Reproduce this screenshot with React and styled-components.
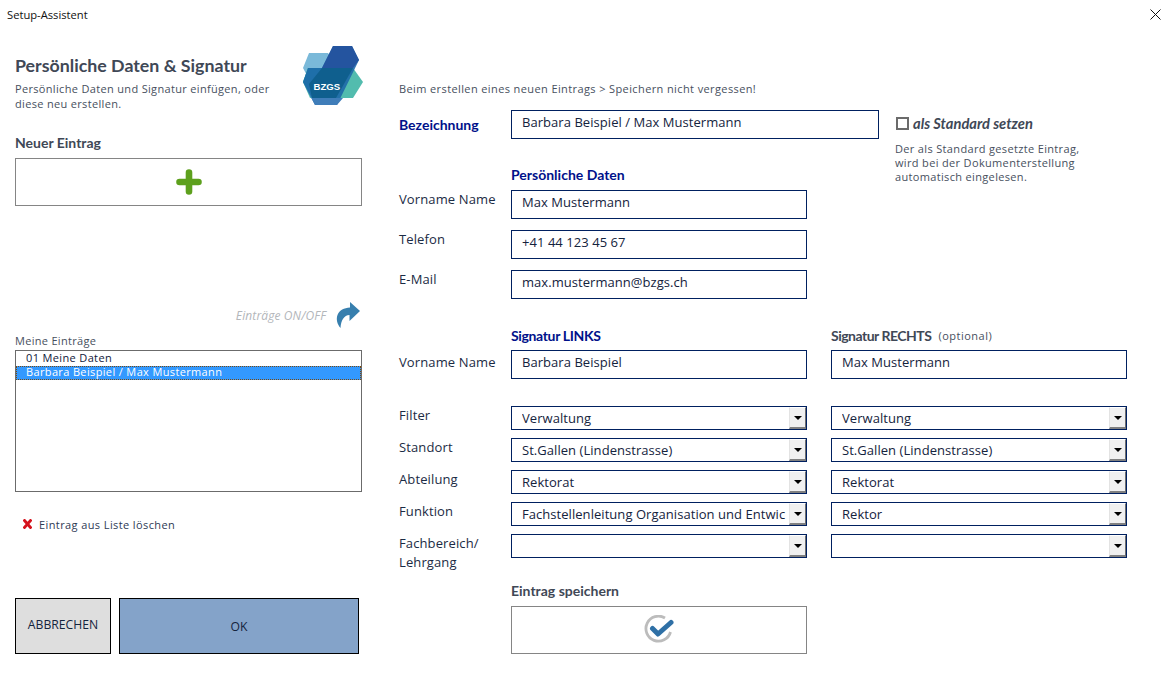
import React from "react";
import styled, { createGlobalStyle } from "styled-components";

const Global = createGlobalStyle`
  html, body { margin: 0; padding: 0; background: #fff; }
  * { box-sizing: border-box; }
`;

const body = `"Open Sans", "Noto Sans", sans-serif`;
const heavy = `Lato, "Open Sans", sans-serif`;

const Window = styled.div`
  width: 1170px; height: 673px; background: #fff; overflow: hidden;
  display: flex; flex-direction: column; font-family: ${body}; color: #1b2b44;
`;
const TitleBar = styled.header`
  height: 30px; flex: none; display: flex; align-items: center; justify-content: space-between;
  padding: 0 9px 2px 7px; font-size: 11.2px; color: #111;
`;
const Main = styled.main`display: flex; flex: 1; padding-left: 15px;`;
const Left = styled.section`width: 347px; flex: none; display: flex; flex-direction: column;`;
const Right = styled.section`margin-left: 37px; flex: 1; display: flex; flex-direction: column;`;

const Head = styled.div`display: flex; justify-content: space-between; height: 84px; padding-top: 16px;`;
const Title = styled.h1`margin: 9px 0 0; font: 700 17.8px/20px ${heavy}; color: #3f4856;`;
const Sub = styled.p`margin: 6px 0 0; font-size: 11px; line-height: 15px; color: #47505e; letter-spacing: .33px; white-space: nowrap;`;
const Logo = styled.svg`width: 60px; height: 60px; flex: none; margin-right: -1px;`;
const SectionLabel = styled.h2`margin: 20px 0 7px; font: 700 14px/17px ${heavy}; color: #3f4856;`;
const ActionBox = styled.button`
  display: flex; align-items: center; justify-content: center; padding: 0; background: #fff;
  border: 1px solid #858585; height: 48px; width: ${p => p.$w || "100%"};
`;
const ToggleRow = styled.div`
  display: flex; justify-content: flex-end; align-items: center; gap: 10px;
  margin-top: 96px; height: 26px; padding-right: 2px;
`;
const ToggleText = styled.span`font-size: 12px; letter-spacing: .12px; font-style: italic; color: #b3b6ba;`;
const ListLabel = styled.div`font-size: 11px; line-height: 14px; margin-top: 6px; color: #47505e; letter-spacing: .3px;`;
const List = styled.div`height: 142px; margin-top: 2px; border: 1px solid #6b6b6b; padding-top: 1px; background: #fff;`;
const ListItem = styled.div`
  height: 14px; padding-left: 10px;
  font-size: 11px; line-height: 12px; letter-spacing: .36px;
  color: ${p => (p.$selected ? "#fff" : "#10203a")};
  background: ${p => (p.$selected ? "#3399ff" : "transparent")};
  outline: ${p => (p.$selected ? "1px dotted #7a4a10" : "none")};
  outline-offset: -1px;
`;
const DeleteRow = styled.div`display: flex; align-items: center; gap: 7px; margin: 25px 0 0 8px; height: 14px; font-size: 11px; color: #2e3a55; letter-spacing: .4px;`;
const Buttons = styled.div`display: flex; gap: 8px; margin-top: 67px;`;
const Btn = styled.button`
  height: 56px; width: ${p => p.$w}px; border: 1px solid #000; background: ${p => p.$bg};
  font: 12.2px ${body}; color: #14233d; padding: ${p => p.$pad};
`;

const Notice = styled.p`margin: 52px 0 0; height: 14px; font-size: 11px; line-height: 14px; color: #47505e; letter-spacing: .39px;`;
const Row = styled.div`
  display: grid; grid-template-columns: 112px 296px 24px 296px; margin-top: ${p => p.$top || 0}px; align-items: start;
`;
const TopRow = styled.div`display: flex; margin-top: 14px; height: 29px;`;
const Label = styled.div`font-size: 13px; line-height: 16px; letter-spacing: .12px; color: #1b2b44; padding-top: ${p => p.$pt ?? 1}px;`;
const TallLabel = styled(Label)`line-height: 19px; padding-top: 0;`;
const NavyLabel = styled.div`
  font: 700 14px/17px ${heavy}; color: #00118a; padding-top: ${p => p.$pt || 0}px;
  width: ${p => (p.$w ? p.$w + "px" : "auto")}; letter-spacing: ${p => p.$ls || 0}px;
`;
const Field = styled.div`
  height: 29px; border: 1px solid #002060; padding: 0 10px 5px; display: flex; align-items: center;
  font-size: 13px; letter-spacing: .05px; color: #14233d; width: ${p => (p.$w ? p.$w + "px" : "auto")}; white-space: nowrap;
`;
const Pick = styled.div`
  height: 24px; border: 1px solid #002060; display: flex; align-items: center; padding-left: 10px;
  font-size: 13px; letter-spacing: .05px; color: #14233d; overflow: hidden; white-space: nowrap;
`;
const PickText = styled.span`flex: 1; overflow: hidden;`;
const PickBtn = styled.span`
  width: 17px; height: 22px; flex: none; background: #f0f0f0; display: flex; align-items: center; justify-content: center;
  border-right: 1px solid #6e6e6e; border-bottom: 2px solid #808080; border-top: 1px solid #fff; border-left: 1px solid #e3e3e3;
`;
const Arrow = styled.i`width: 0; height: 0; border: 4px solid transparent; border-top-color: #000; border-bottom: 0; display: block;`;
const Standard = styled.div`margin-left: 17px; display: flex; align-items: flex-start; gap: 4px; padding-top: 7px;`;
const Check = styled.span`width: 13px; height: 13px; border: 2px solid #6b6b6b; display: block;`;
const StandardText = styled.span`font: italic 700 14.7px/13px ${heavy}; color: #3f4856;`;
const StandardNote = styled.p`
  margin: 3px 0 0 496px; height: 42px; font-size: 11px; line-height: 14px; color: #47505e; letter-spacing: .34px; white-space: nowrap;
`;
const DarkLabel = styled.div`font: 700 14px/17px ${heavy}; color: #3f4856; letter-spacing: ${p => p.$ls || 0}px;`;
const Optional = styled.span`font: 11px ${body}; letter-spacing: .5px; margin-left: 7px; color: #47505e; position: relative; top: -1px;`;

const Empty = () => <span />;

const Select = ({ children }) => (
  <Pick>
    <PickText>{children}</PickText>
    <PickBtn><Arrow /></PickBtn>
  </Pick>
);

export default function App() {
  return (
    <Window>
      <Global />
      <TitleBar>
        <span>Setup-Assistent</span>
        <svg width="11" height="11" viewBox="0 0 11 11"><path d="M.5.5l10 10M10.5.5l-10 10" stroke="#111" strokeWidth="1" /></svg>
      </TitleBar>
      <Main>
        <Left>
          <Head>
            <div>
              <Title>Persönliche Daten &amp; Signatur</Title>
              <Sub>Persönliche Daten und Signatur einfügen, oder<br />diese neu erstellen.</Sub>
            </div>
            <Logo viewBox="303 46 60 60">
              <polygon points="303,68 309,53 328,53 340,68 310,81" fill="#7ab9d9" />
              <polygon points="303,82 308,68 353,68 363,82 353,98 310,98" fill="#52bcae" />
              <polygon points="303,82 308,68 322,68 334,98 312,98" fill="#27a5ad" opacity=".9" />
              <polygon points="333,46 352,46 359,60 337,105 315,105 303,82 308,68 322,68" fill="#1d67a8" opacity=".88" />
              <polygon points="333,46 352,46 359,60 353,68 322,68" fill="#24549f" />
              <polygon points="322,68 353,68 336,98 312,98 309,84" fill="#0f5f8e" />
              <polygon points="303,82 312,98 343,98 337,105 315,105" fill="#3f7db9" />
              <text x="313.500" y="89.500" fontFamily="Liberation Sans, sans-serif" fontWeight="700" fontSize="9.600" fill="#fff">BZGS</text>
            </Logo>
          </Head>
          <SectionLabel>Neuer Eintrag</SectionLabel>
          <ActionBox aria-label="Neuer Eintrag">
            <svg width="26" height="26" viewBox="0 0 26 26"><path d="M13 3.500v19M3.500 13h19" stroke="#5da01d" strokeWidth="6.600" strokeLinecap="round" /></svg>
          </ActionBox>
          <ToggleRow>
            <ToggleText>Einträge ON/OFF</ToggleText>
            <svg width="24" height="27" viewBox="0 0 24 27"><path d="M14 0 24 9 13.500 19V13C8 13.500 5 18 4.500 26 1 22 0 17 1.500 13 3.500 8 8 6 14 5.500Z" fill="#377fae" /></svg>
          </ToggleRow>
          <ListLabel>Meine Einträge</ListLabel>
          <List>
            <ListItem>01 Meine Daten</ListItem>
            <ListItem $selected>Barbara Beispiel / Max Mustermann</ListItem>
          </List>
          <DeleteRow>
            <svg width="9" height="10" viewBox="0 0 9 10"><path d="M1.500 1.500l6 7M7.500 1.500l-6 7" stroke="#d5121c" strokeWidth="2.800" strokeLinecap="square" /></svg>
            Eintrag aus Liste löschen
          </DeleteRow>
          <Buttons>
            <Btn $w={96} $bg="#dedede" $pad="0 0 4px">ABBRECHEN</Btn>
            <Btn $w={240} $bg="#84a3c9" $pad="0">OK</Btn>
          </Buttons>
        </Left>
        <Right>
          <Notice>Beim erstellen eines neuen Eintrags &gt; Speichern nicht vergessen!</Notice>
          <TopRow>
            <NavyLabel $w={112} $pt={6}>Bezeichnung</NavyLabel>
            <Field $w={368}>Barbara Beispiel / Max Mustermann</Field>
            <Standard><Check /><StandardText>als Standard setzen</StandardText></Standard>
          </TopRow>
          <StandardNote>Der als Standard gesetzte Eintrag,<br />wird bei der Dokumenterstellung<br />automatisch eingelesen.</StandardNote>
          <Row $top={-18}><Empty /><NavyLabel>Persönliche Daten</NavyLabel></Row>
          <Row $top={7}><Label>Vorname Name</Label><Field>Max Mustermann</Field></Row>
          <Row $top={11}><Label>Telefon</Label><Field>+41 44 123 45 67</Field></Row>
          <Row $top={11}><Label>E-Mail</Label><Field>max.mustermann@bzgs.ch</Field></Row>
          <Row $top={28}><Empty /><NavyLabel $ls={-0.35}>Signatur LINKS</NavyLabel><Empty /><DarkLabel $ls={-0.5}>Signatur RECHTS<Optional>(optional)</Optional></DarkLabel></Row>
          <Row $top={6}><Label $pt={4}>Vorname Name</Label><Field>Barbara Beispiel</Field><Empty /><Field>Max Mustermann</Field></Row>
          <Row $top={27}><Label>Filter</Label><Select>Verwaltung</Select><Empty /><Select>Verwaltung</Select></Row>
          <Row $top={8}><Label>Standort</Label><Select>St.Gallen (Lindenstrasse)</Select><Empty /><Select>St.Gallen (Lindenstrasse)</Select></Row>
          <Row $top={8}><Label>Abteilung</Label><Select>Rektorat</Select><Empty /><Select>Rektorat</Select></Row>
          <Row $top={8}><Label>Funktion</Label><Select>Fachstellenleitung Organisation und Entwic</Select><Empty /><Select>Rektor</Select></Row>
          <Row $top={8}><TallLabel>Fachbereich/<br />Lehrgang</TallLabel><Select /><Empty /><Select /></Row>
          <Row $top={10}><Empty /><DarkLabel>Eintrag speichern</DarkLabel></Row>
          <Row $top={7}>
            <Empty />
            <ActionBox $w="296px" aria-label="Eintrag speichern">
              <svg width="30" height="30" viewBox="0 0 30 30">
                <path d="M26.500 17A12.500 12.500 0 1 1 21 3" fill="none" stroke="#bcbcbc" strokeWidth="2.800" />
                <path d="M8.500 13.500l5.500 5.500L27 7.500" fill="none" stroke="#2f70a6" strokeWidth="5" strokeLinecap="round" strokeLinejoin="round" />
              </svg>
            </ActionBox>
          </Row>
        </Right>
      </Main>
    </Window>
  );
}
